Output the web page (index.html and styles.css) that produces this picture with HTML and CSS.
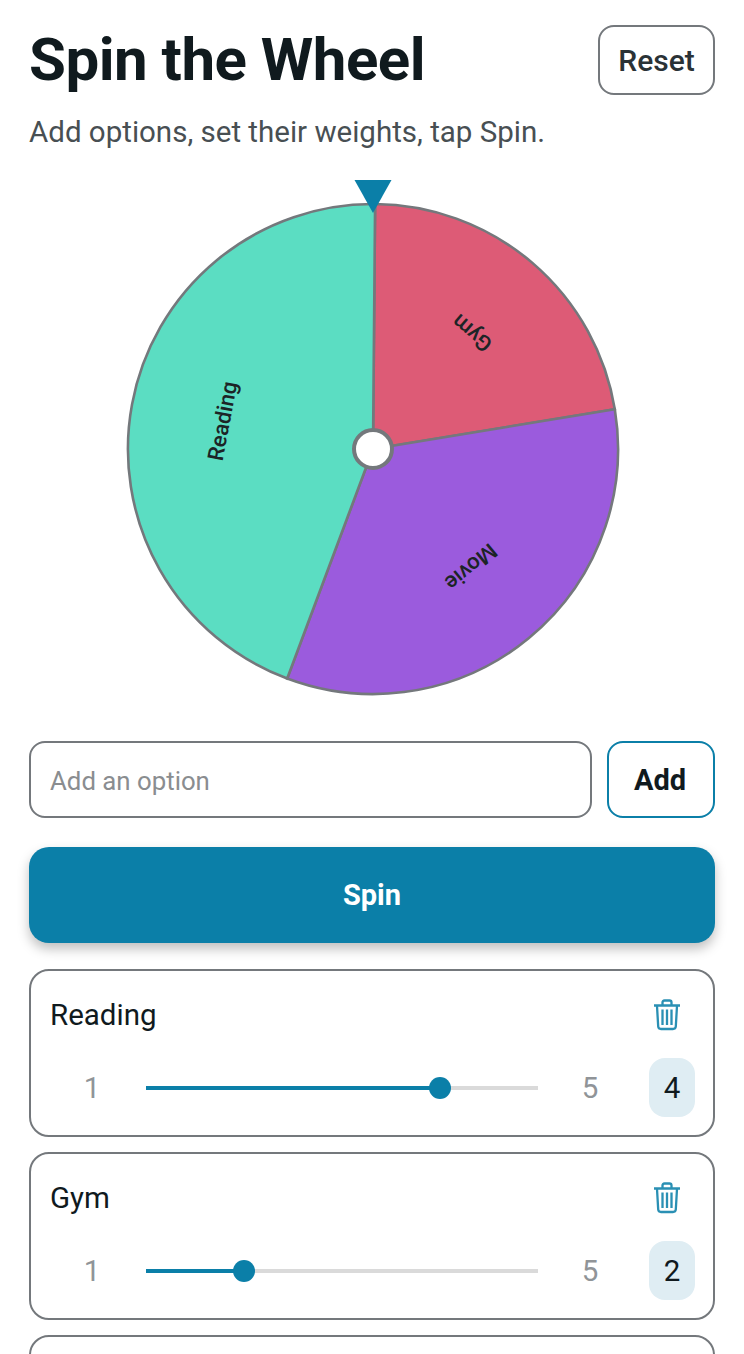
FILE: index.html
```html
<!DOCTYPE html>
<html lang="en">
<head>
    <meta charset="UTF-8">
    <meta name="viewport" content="width=device-width, initial-scale=1.0">
    <title>Spin the Wheel</title>
    <link rel="stylesheet" href="styles.css">
</head>
<body>
    <div class="container">
        <div class="header">
            <h1 class="title">Spin the Wheel</h1>
            <button class="reset-btn">Reset</button>
        </div>
        <p class="subtitle">Add options, set their weights, tap Spin.</p>

        <div class="wheel-box">
            <svg class="wheel" width="504" height="528" viewBox="0 0 504 528">
                <g stroke="#74787c" stroke-width="2.6">
                    <path d="M252 274 L254.1 29 A245 245 0 0 1 493.8 234.2 Z" fill="#dd5b76"/>
                    <path d="M252 274 L493.8 234.2 A245 245 0 0 1 166.2 503.5 Z" fill="#9b5bdd"/>
                    <path d="M252 274 L166.2 503.5 A245 245 0 0 1 254.1 29 Z" fill="#5bddc2"/>
                </g>
                <text class="slice-label" transform="translate(351 158) rotate(220.5)">Gym</text>
                <text class="slice-label" transform="translate(350 392) rotate(140.5)">Movie</text>
                <text class="slice-label" transform="translate(101.500 246) rotate(280.5)">Reading</text>
                <circle cx="252" cy="274" r="19" fill="#fff" stroke="#74787c" stroke-width="4"/>
                <polygon points="233.500,5 270.500,5 252,38" fill="#0b7fa8"/>
            </svg>
        </div>

        <div class="add-row">
            <input class="add-input" type="text" placeholder="Add an option">
            <button class="add-btn">Add</button>
        </div>
        <button class="spin-btn">Spin</button>

        <div class="option-card">
            <div class="option-top">
                <span class="option-name">Reading</span>
                <svg class="trash" width="28" height="32" viewBox="0 0 28 32" fill="none" stroke="#2a90b4" stroke-width="2.3">
                    <path d="M1 6.500H27M9.500 6V3.500Q9.500 1.500 11.500 1.500H16.500Q18.500 1.500 18.500 3.500V6M4 7L5.200 27.500Q5.400 30 8 30H20Q22.600 30 22.800 27.500L24 7M9.500 10.500V26M14 10.500V26M18.500 10.500V26"/>
                </svg>
            </div>
            <div class="slider-row">
                <span class="limit">1</span>
                <div class="track"><div class="fill" style="width: 75%"></div><div class="thumb" style="left: 75%"></div></div>
                <span class="limit">5</span>
                <span class="value">4</span>
            </div>
        </div>

        <div class="option-card">
            <div class="option-top">
                <span class="option-name">Gym</span>
                <svg class="trash" width="28" height="32" viewBox="0 0 28 32" fill="none" stroke="#2a90b4" stroke-width="2.3">
                    <path d="M1 6.500H27M9.500 6V3.500Q9.500 1.500 11.500 1.500H16.500Q18.500 1.500 18.500 3.500V6M4 7L5.200 27.500Q5.400 30 8 30H20Q22.600 30 22.800 27.500L24 7M9.500 10.500V26M14 10.500V26M18.500 10.500V26"/>
                </svg>
            </div>
            <div class="slider-row">
                <span class="limit">1</span>
                <div class="track"><div class="fill" style="width: 25%"></div><div class="thumb" style="left: 25%"></div></div>
                <span class="limit">5</span>
                <span class="value">2</span>
            </div>
        </div>

        <div class="option-card"></div>
    </div>
</body>
</html>
```

FILE: styles.css
```css
* {
    box-sizing: border-box;
    margin: 0;
    padding: 0;
}

body {
    background: #fff;
    color: #101a1e;
    font-family: 'Roboto', sans-serif;
}

.container {
    height: 1354px;
    overflow: hidden;
    padding: 25px 29px 0;
}

.header {
    display: flex;
    justify-content: space-between;
    align-items: center;
    height: 70px;
}

.title {
    font-size: 60px;
    font-weight: 700;
    line-height: 70px;
    letter-spacing: -0.5px;
}

.reset-btn {
    width: 117px;
    height: 70px;
    border: 2px solid #74787c;
    border-radius: 16px;
    background: #fff;
    color: #2a3236;
    font: 500 30px 'Roboto', sans-serif;
}

.subtitle {
    margin-top: 18px;
    font-size: 29.5px;
    line-height: 38px;
    color: #484f53;
}

.wheel-box {
    display: flex;
    justify-content: center;
    margin-top: 24px;
    padding-left: 1px;
}

.wheel {
    display: block;
}

.slice-label {
    font-size: 22px;
    font-weight: 500;
    fill: #1c2426;
    text-anchor: middle;
    dominant-baseline: central;
}

.add-row {
    display: flex;
    gap: 15px;
    margin-top: 38px;
}

.add-input {
    flex: 1;
    min-width: 0;
    height: 77px;
    padding: 2px 18px 0 19px;
    border: 2px solid #74787c;
    border-radius: 16px;
    font: 400 25.8px 'Roboto', sans-serif;
    outline: none;
}

.add-input::placeholder {
    color: #8a8d90;
}

.add-btn {
    width: 108px;
    height: 77px;
    padding-right: 2px;
    border: 2px solid #0b7fa8;
    border-radius: 16px;
    background: #fff;
    color: #101a1e;
    font: 700 29px 'Roboto', sans-serif;
}

.spin-btn {
    display: block;
    width: 100%;
    height: 96px;
    margin-top: 29px;
    border: none;
    border-radius: 20px;
    background: #0b7fa8;
    color: #fff;
    font: 700 29px 'Roboto', sans-serif;
    box-shadow: 0 6px 12px rgba(0, 0, 0, 0.25);
}

.option-card {
    height: 168px;
    margin-top: 15px;
    padding: 19px 18px 0 19px;
    border: 2px solid #74787c;
    border-radius: 20px;
    background: #fff;
}

.spin-btn + .option-card {
    margin-top: 26px;
}

.option-top {
    display: flex;
    justify-content: space-between;
    align-items: center;
    height: 50px;
}

.option-name {
    font-size: 29.5px;
}

.trash {
    margin-right: 14px;
}

.slider-row {
    display: flex;
    align-items: center;
    margin-top: 18px;
}

.limit {
    width: 84px;
    text-align: center;
    font-size: 29.5px;
    color: #909498;
}

.track {
    position: relative;
    flex: 1;
    height: 4px;
    margin: 0 10px 0 12px;
    background: #dadada;
}

.fill {
    height: 100%;
    background: #0b7fa8;
}

.thumb {
    position: absolute;
    top: -9px;
    width: 22px;
    height: 22px;
    margin-left: -11px;
    border-radius: 50%;
    background: #0b7fa8;
}

.value {
    display: flex;
    align-items: center;
    justify-content: center;
    width: 46px;
    height: 59px;
    margin-left: 17px;
    border-radius: 16px;
    background: #dfedf3;
    font-size: 29.5px;
}
```
